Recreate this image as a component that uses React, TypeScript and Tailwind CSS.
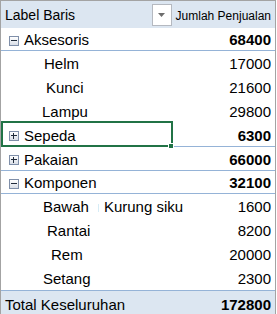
import React from "react";

type Item = {
  label: string;
  value: string;
  indent: number;
  bold?: boolean;
  toggle?: "plus" | "minus";
  h: number;
  line?: boolean;
  extra?: React.ReactNode;
};

const ToggleBox: React.FC<{ kind: "plus" | "minus" }> = ({ kind }) => (
  <span className="relative mr-[5px] inline-block h-[10px] w-[10px] shrink-0 border border-[#7f8fa9] bg-gradient-to-b from-[#ffffff] to-[#d9dee7]">
    <span className="absolute left-[1px] top-[3px] h-px w-[6px] bg-[#1f2a3a]" />
    {kind === "plus" && (
      <span className="absolute left-[3px] top-[1px] h-[6px] w-px bg-[#1f2a3a]" />
    )}
  </span>
);

const rows: Item[] = [
  { label: "Aksesoris", value: "68400", indent: 8, bold: true, toggle: "minus", h: 22, line: true },
  { label: "Helm", value: "17000", indent: 43, h: 24 },
  { label: "Kunci", value: "21600", indent: 45, h: 24 },
  { label: "Lampu", value: "29800", indent: 41, h: 24 },
  { label: "Sepeda", value: "6300", indent: 8, bold: true, toggle: "plus", h: 23, line: true },
  { label: "Pakaian", value: "66000", indent: 8, bold: true, toggle: "plus", h: 23, line: true },
  { label: "Komponen", value: "32100", indent: 8, bold: true, toggle: "minus", h: 22, line: true },
  {
    label: "Bawah",
    value: "1600",
    indent: 42,
    h: 24,
    extra: (
      <>
        <span className="ml-[9px] h-[8px] w-px bg-[#d6ecf6]" />
        <span className="ml-[5px]">Kurung siku</span>
      </>
    ),
  },
  { label: "Rantai", value: "8200", indent: 46, h: 24 },
  { label: "Rem", value: "20000", indent: 50, h: 24 },
  { label: "Setang", value: "2300", indent: 42, h: 24 },
];

export default function App() {
  return (
    <div
      className="relative h-[314px] w-[277px] bg-white text-black"
      style={{ fontFamily: '"Liberation Sans", Arial, sans-serif' }}
    >
      <div className="flex h-[314px] w-[276px] flex-col border border-[#a3a3a3]">
        {/* Header */}
        <div className="flex h-[27px] shrink-0 items-center bg-[#dce6f1]">
          <span className="pl-[4px] pt-[2px] text-[14px]">Label Baris</span>
          <span className="ml-auto mt-[1px] flex h-[22px] w-[20px] items-center justify-center border border-[#b5b9c0] bg-white">
            <svg width="7" height="4" viewBox="0 0 7 4">
              <path d="M0 0h7L3.5 4z" fill="#6d6d6d" />
            </svg>
          </span>
          <span className="ml-[4px] pr-[4px] pt-[2px] text-[12px]">Jumlah Penjualan</span>
        </div>

        {rows.map((r) => (
          <div
            key={r.label}
            className={`flex shrink-0 items-center pr-[4px] pt-[3px] text-[14px] ${
              r.line ? "border-b border-[#95b3d7]" : ""
            }`}
            style={{ height: r.h + (r.line ? 1 : 0), paddingLeft: r.indent }}
          >
            {r.toggle && <ToggleBox kind={r.toggle} />}
            <span className="text-[15px]">{r.label}</span>
            {r.extra && <span className="flex items-center text-[15px]">{r.extra}</span>}
            <span className={`ml-auto text-[15px] ${r.bold ? "font-bold" : ""}`}>{r.value}</span>
          </div>
        ))}

        {/* Total */}
        <div className="flex flex-1 items-center border-t border-[#95b3d7] bg-[#dce6f1] pl-[4px] pr-[4px] pt-[3px]">
          <span className="text-[15px]">Total Keseluruhan</span>
          <span className="ml-auto text-[15px] font-bold">172800</span>
        </div>
      </div>

      {/* Selected cell */}
      <div className="absolute left-[1px] top-[121px] h-[26px] w-[172px] border-2 border-[#217346]" />
      <div className="absolute left-[168px] top-[143px] h-[6px] w-[6px] border border-white bg-[#217346]" />
    </div>
  );
}
